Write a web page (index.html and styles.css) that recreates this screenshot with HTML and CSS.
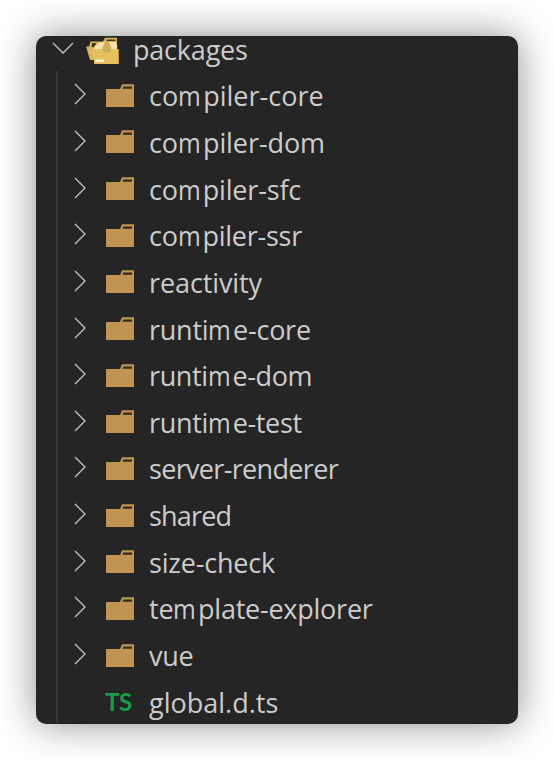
FILE: index.html
```html
<!DOCTYPE html>
<html lang="en">
<head>
  <meta charset="UTF-8">
  <title>packages</title>
  <link rel="stylesheet" href="styles.css">
</head>
<body>

  <svg class="symbols" width="0" height="0">
    <symbol id="chevron" viewBox="0 0 12 22">
      <path d="M1 1 L11 11 L1 21" fill="none" stroke="#c5c5c5" stroke-width="1.3"/>
    </symbol>
    <symbol id="folder" viewBox="0 0 28 24">
      <path d="M0 5 H14 L16 0.3 H28 V23 H0 Z" fill="#c09553"/>
      <path d="M17.500 2.500 H26 V4.800 H16.500 Z" fill="#33291d"/>
    </symbol>
  </svg>

  <div class="explorer">
    <div class="row root">
      <svg class="arrow-down" viewBox="0 0 22 12"><path d="M1 1 L11 11 L21 1" fill="none" stroke="#c5c5c5" stroke-width="1.3"/></svg>
      <svg class="folder-open" viewBox="0 0 33 28">
        <path d="M0 9.500 H3 L4.500 4.500 H17 L19 0.800 H31 V12 H32.500 V27 H8 V23 H4 Z" fill="#d9b35c"/>
        <path d="M6 6 H10.500 L8 10 H5.500 Z M21 2.500 H29.500 V4 H20.500 Z" fill="#403721"/>
        <path d="M8 12 Q10 5 18 5 H29 Q32 7 31 13 Z" fill="#f3e2af"/>
        <path d="M16 12 L19 5 H23 L25.500 12 Q25 16 21 16 Q16.500 16 16 12 Z" fill="#d3ae58"/>
        <path d="M5 12 H16 Q16.500 16 21 16 Q25 16 25.500 12 H32.500 V27 H8.500 V23 H7 Z" fill="#e6c05c"/>
        <path d="M9.500 22.500 H18 V25 H9.500 Z" fill="#fff3d2"/>
      </svg>
      <span class="name">packages</span>
    </div>

    <div class="children" id="children"></div>
  </div>

  <script>
    // name, width of the label
    const items = [
      ['compiler-core', 175],
      ['compiler-dom', 176],
      ['compiler-sfc', 152],
      ['compiler-ssr', 153],
      ['reactivity', 113],
      ['runtime-core', 162],
      ['runtime-dom', 163],
      ['runtime-test', 153],
      ['server-renderer', 189],
      ['shared', 82],
      ['size-check', 126],
      ['template-explorer', 224],
      ['vue', 44],
      ['global.d.ts', 129]
    ];
    const children = document.getElementById('children');

    items.forEach(([name, width]) => {
      const row = document.createElement('div');
      row.className = 'row';
      const isFile = name.endsWith('.ts');
      const icons = isFile
        ? '<span class="arrow"></span><span class="ts">TS</span>'
        : '<svg class="arrow"><use href="#chevron"/></svg><svg class="folder"><use href="#folder"/></svg>';
      // the m is a little tighter and leaves a gap behind it
      const label = name.replace(/m(?=.)/g, '<span class="m">m</span>');
      row.innerHTML = `${icons}<span class="name">${label}</span>`;
      children.appendChild(row);

      const text = row.querySelector('.name');
      const spacing = (width - text.offsetWidth) / name.length;
      text.style.letterSpacing = spacing.toFixed(2) + 'px';
    });
  </script>

</body>
</html>
```
FILE: styles.css
```css
body {
  margin: 0;
  padding: 36px;
  background-color: #fff;
}

.symbols {
  display: block;
}

.explorer {
  box-sizing: border-box;
  width: 482px;
  height: 688px;
  overflow: hidden;
  border-radius: 10px;
  background-color: #252525;
  box-shadow: 0 0 38px rgba(0, 0, 0, 0.45);
  color: #cccccc;
  font-family: "Open Sans", "Noto Sans", sans-serif;
  font-size: 27px;
}

.row {
  display: flex;
  align-items: center;
  height: 46.65px;
}

.root {
  height: 35px;
  padding-left: 16px;
}

.arrow-down {
  width: 22px;
  height: 12px;
  margin: 0 12px 11px 0;
}

.folder-open {
  width: 33px;
  height: 28px;
  margin: 0 14px 6px 0;
}

.root .name {
  padding: 0 0 7px;
  line-height: 28px;
  letter-spacing: -0.2px;
}

.children {
  margin-left: 20px;
  padding: 2px 0 0 16px;
  border-left: 2px solid #363636;
}

.arrow {
  width: 12px;
  height: 22px;
  margin: 0 20px 4px 0;
}

.folder {
  width: 28px;
  height: 24px;
  margin: 0 15px 1px 0;
}

.ts {
  width: 28px;
  margin: 0 15px 2px 0;
  color: #1a9b48;
  font-family: Lato, sans-serif;
  font-size: 24px;
  font-weight: bold;
  letter-spacing: -0.4px;
  text-indent: -1px;
}

.name {
  line-height: 36px;
  white-space: nowrap;
}

.m {
  display: inline-block;
  transform: scaleX(0.91);
  transform-origin: left;
}
```
